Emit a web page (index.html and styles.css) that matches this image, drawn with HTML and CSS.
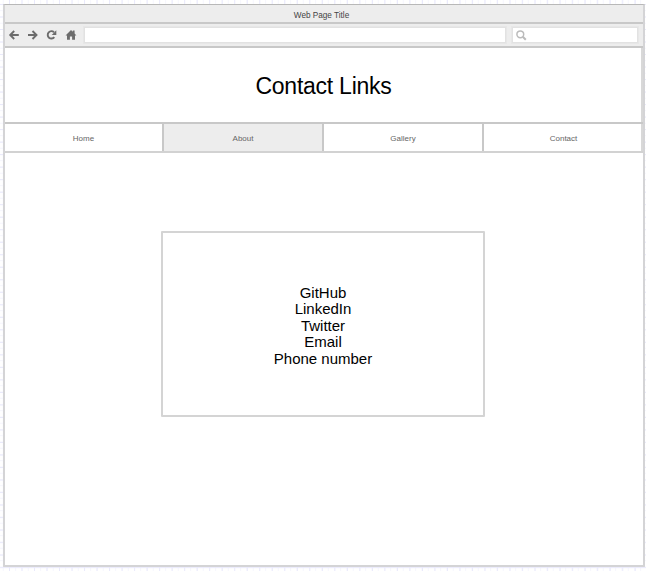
FILE: index.html
```
<!DOCTYPE html>
<html lang="en">
<head>
<meta charset="utf-8">
<title>Contact Links</title>
<link rel="stylesheet" href="styles.css">
</head>
<body>
<div class="window">
  <div class="titlebar">Web Page Title</div>
  <div class="toolbar">
    <svg class="icons" width="76" height="20" viewBox="0 0 76 20" fill="none" stroke="#6c6c6c" stroke-width="1.9">
      <path d="M10.8 10H2.4M6.2 6L2.2 10L6.2 14"/>
      <path d="M20 10H28.5M24.5 6L28.5 10L24.5 14"/>
      <path d="M46.3 12.2A3.7 3.7 0 1 1 46 7.2"/>
      <path d="M48.3 5.3V9.9H43.7Z" fill="#6c6c6c" stroke="none"/>
      <path d="M57.5 10.4L63 5L64.8 6.8V5.5H66.6V8.6L68.4 10.4H67V14.8H64.1V11.5H61.9V14.8H59V10.4Z" fill="#6c6c6c" stroke="none"/>
    </svg>
    <div class="field address"></div>
    <div class="field search">
      <svg width="12" height="12" viewBox="0 0 12 12" fill="none" stroke="#bbb"><circle cx="4.3" cy="4.3" r="3.4" stroke-width="1.5"/><path d="M6.8 6.8L9.8 9.8" stroke-width="2"/></svg>
    </div>
  </div>
  <header class="header"><h1>Contact Links</h1></header>
  <nav class="nav">
    <a>Home</a><a class="active">About</a><a>Gallery</a><a class="last">Contact</a>
  </nav>
  <main class="content">
    <ul class="links">
      <li>GitHub</li><li>LinkedIn</li><li>Twitter</li><li>Email</li><li>Phone number</li>
    </ul>
  </main>
</div>
</body>
</html>
```
FILE: styles.css
```
* { box-sizing: border-box; }
body {
  margin: 0;
  height: 571px;
  padding: 4px 1px 0 3px;
  overflow: hidden;
  font-family: "Liberation Sans", Arial, sans-serif;
  background-color: #fff;
  background-image:
    linear-gradient(90deg, #e9e9fb 1px, transparent 1px),
    linear-gradient(#e9e9fb 1px, transparent 1px),
    linear-gradient(90deg, #f5f5fd 1px, transparent 1px),
    linear-gradient(#f5f5fd 1px, transparent 1px);
  background-size: 12.52px 12.52px, 12.52px 12.52px, 6.26px 6.26px, 6.26px 6.26px;
  background-position: 9px 4px, 9px 4px, 9px 4px, 9px 4px;
}
.window {
  display: flex;
  flex-direction: column;
  width: 642px;
  height: 563px;
  background: #fff;
  border: 2px solid #d4d4d6;
  border-top: 1px solid #b8b8b8;
  border-radius: 1px;
}
.titlebar {
  height: 17px;
  background: #ededed;
  font-size: 8.2px;
  line-height: 22px;
  text-align: center;
  color: #444;
  padding-right: 5px;
}
.toolbar {
  display: flex;
  align-items: center;
  height: 26px;
  padding: 0 5px 0 3px;
  background: #ededed;
  border-top: 2px solid #c8c8c8;
  border-bottom: 2px solid #c8c8c8;
}
.icons { margin-top: -1px; }
.field {
  height: 16px;
  background: #fff;
  border: 1px solid #e2e2e2;
  box-shadow: 0 0 0 1px #e7e7e7;
}
.address { width: 422px; }
.search {
  width: 126px;
  margin-left: 6px;
  padding: 2px 3px;
}
.search svg { display: block; }
.header {
  height: 74px;
  border-right: 2px solid #d8d8d8;
  display: flex;
  align-items: center;
  justify-content: center;
}
.header h1 {
  margin: 2px 0 0 1px;
  font-size: 23px;
  line-height: 28px;
  font-weight: 400;
  letter-spacing: -0.25px;
  color: #000;
}
.nav {
  display: grid;
  grid-template-columns: 159px 160px 160px 159px;
  height: 31px;
  border-top: 2px solid #c8c8c8;
  border-bottom: 2px solid #d2d2d2;
}
.nav a {
  height: 27px;
  border-right: 2px solid #c8c8c8;
  font-size: 8px;
  line-height: 30px;
  text-align: center;
  color: #666;
}
.nav .active { background: #ededed; }
.nav .last {
  padding-left: 2px;
  border-right-color: #d8d8d8;
}
.content {
  flex: 1;
  padding: 78px 0 0 156px;
}
.links {
  width: 324px;
  height: 186px;
  margin: 0;
  padding: 51.7px 0 0;
  list-style: none;
  border: 2px solid #d4d4d4;
  border-radius: 1px;
  font-size: 15px;
  line-height: 16.5px;
  text-align: center;
  color: #000;
}
```
